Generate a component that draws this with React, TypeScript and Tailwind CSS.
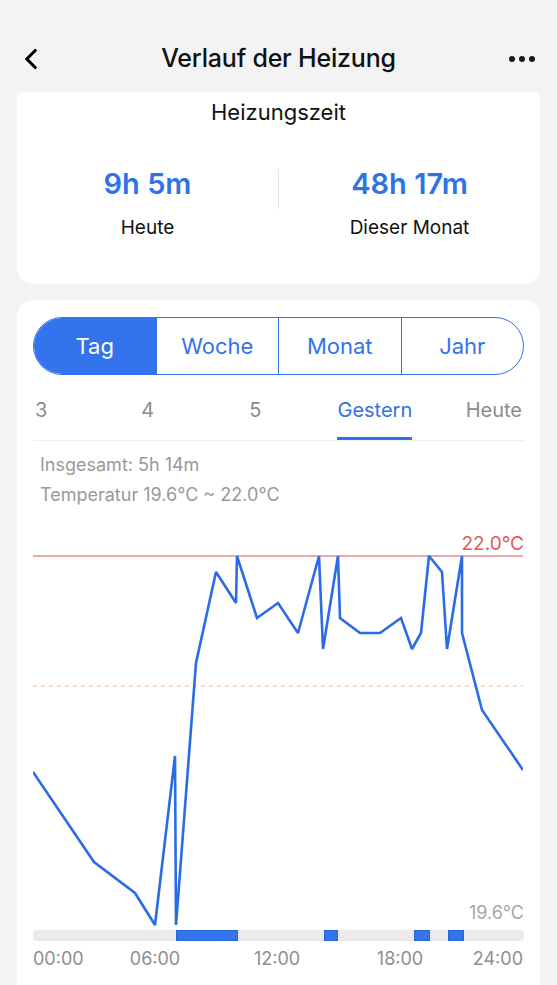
import { ChevronLeft } from 'lucide-react';

const points = [
    [0, 252], [61, 342], [102, 373], [122, 405], [142, 236], [143, 405], [163, 143],
    [183, 52], [203, 83], [204, 36], [224, 98], [245, 83], [265, 113], [286, 36],
    [290, 129], [305, 36], [307, 98], [327, 113], [347, 113], [368, 98], [379, 129],
    [388, 113], [396, 36], [409, 52], [414, 129], [429, 36], [429, 113], [449, 190],
    [490, 250],
];

// heating periods in hours
const heating = [
    [7.0, 10.0],
    [14.2, 14.9],
    [18.6, 19.4],
    [20.3, 21.05],
];

const font = { fontFamily: 'Inter, "Noto Sans", sans-serif' };

function Header() {
    return (
        <div className="h-[92px] pt-[36px] px-[14px]">
            <div className="flex items-center h-[46px]">
                <ChevronLeft size={34} strokeWidth={2.2} className="text-black" />
                <div className="grow text-center text-[25px] font-medium text-[#111] tracking-[-0.2px]">
                    Verlauf der Heizung
                </div>
                <div className="flex gap-[4px] pr-[8px]">
                    <span className="w-[6px] h-[6px] rounded-full bg-[#1a1a1a]" />
                    <span className="w-[6px] h-[6px] rounded-full bg-[#1a1a1a]" />
                    <span className="w-[6px] h-[6px] rounded-full bg-[#1a1a1a]" />
                </div>
            </div>
        </div>
    );
}

function SummaryCard() {
    return (
        <div className="mx-[17px] bg-white rounded-b-2xl rounded-t-md pt-[8px] pb-[45px]">
            <div className="text-center text-[22px] leading-[24px] text-[#111]">Heizungszeit</div>
            <div className="flex items-center mt-[44px]">
                <div className="flex-1 flex flex-col items-center">
                    <div className="text-[29px] leading-[32px] font-semibold text-[#2f73e6]">9h 5m</div>
                    <div className="text-[19px] leading-[22px] mt-[17px] text-[#111]">Heute</div>
                </div>
                <div className="w-px h-[40px] bg-[#e6e6e6] -mt-[30px]" />
                <div className="flex-1 flex flex-col items-center">
                    <div className="text-[29px] leading-[32px] font-semibold text-[#2f73e6]">48h 17m</div>
                    <div className="text-[19px] leading-[22px] mt-[17px] text-[#111]">Dieser Monat</div>
                </div>
            </div>
        </div>
    );
}

function Segments() {
    const items = ['Tag', 'Woche', 'Monat', 'Jahr'];
    return (
        <div className="flex h-[58px] rounded-full border-[1.5px] border-[#3373eb] overflow-hidden">
            {items.map((t, i) => (
                <div
                    key={t}
                    className={
                        i === 0
                            ? 'flex-1 flex items-center justify-center bg-[#3373eb] text-white text-[22px]'
                            : 'flex-1 flex items-center justify-center text-[#3373eb] text-[22px] border-l-[1.5px] border-[#3373eb]'
                    }
                >
                    {t}
                </div>
            ))}
        </div>
    );
}

function DayTabs() {
    return (
        <div className="flex items-start h-[66px] pt-[23px] border-b border-[#eeeeee] text-[20px] leading-[24px] text-[#8c8c8c]">
            <div className="pl-[2px]">3</div>
            <div className="ml-[94px]">4</div>
            <div className="ml-[95px]">5</div>
            <div className="ml-[76px] flex flex-col items-stretch">
                <span className="text-[#2f73e6]">Gestern</span>
                <span className="h-[3px] bg-[#2f73e6] mt-[15px]" />
            </div>
            <div className="ml-auto pr-[2px]">Heute</div>
        </div>
    );
}

function Chart() {
    const line = points.map(p => p.join(',')).join(' ');
    return (
        <div>
            <div className="relative h-[408px]">
                <svg width="490" height="408" viewBox="0 0 490 408" className="block">
                    <line x1="0" y1="36" x2="490" y2="36" stroke="#e05252" strokeWidth="1.2" />
                    <line x1="0" y1="166" x2="490" y2="166" stroke="#f6bd84" strokeWidth="1" strokeDasharray="4 4" />
                    <polyline
                        points={line}
                        fill="none"
                        stroke="#2a6be6"
                        strokeWidth="2.6"
                        strokeLinejoin="miter"
                        strokeMiterlimit="2"
                    />
                </svg>
                <div className="absolute right-0 top-[13px] text-[19px] leading-[22px] text-[#e05a5a]">22.0°C</div>
                <div className="absolute right-0 top-[382px] text-[18px] leading-[22px] text-[#a6a6a6]">19.6°C</div>
            </div>
            <div className="relative mt-[2px] h-[11px] rounded-sm bg-[#ebebeb] overflow-hidden">
                {heating.map(([a, b], i) => (
                    <div
                        key={i}
                        className="absolute top-0 bottom-0 bg-[#3373eb] border border-[#2a64d4]"
                        style={{ left: `${(a / 24) * 100}%`, width: `${((b - a) / 24) * 100}%` }}
                    />
                ))}
            </div>
            <div className="flex mt-[7px] text-[18px] leading-[22px] text-[#8e8e8e]">
                <div className="w-[60px] text-left">00:00</div>
                <div className="w-[124px] text-center">06:00</div>
                <div className="w-[120px] text-center">12:00</div>
                <div className="w-[126px] text-center">18:00</div>
                <div className="w-[60px] text-right">24:00</div>
            </div>
        </div>
    );
}

export default function App() {
    return (
        <div className="w-[557px] h-[985px] overflow-hidden bg-[#f3f3f3]" style={font}>
            <Header />
            <SummaryCard />
            <div className="mx-[17px] mt-[16px] bg-white rounded-2xl px-[16px] pt-[17px] pb-[30px]">
                <Segments />
                <DayTabs />
                <div className="pt-[13px] px-[7px] text-[18px] leading-[22px] text-[#999999]">
                    <div>Insgesamt: 5h 14m</div>
                    <div className="mt-[8px]">Temperatur 19.6°C ~ 22.0°C</div>
                </div>
                <div className="mt-[14px]">
                    <Chart />
                </div>
            </div>
        </div>
    );
}
